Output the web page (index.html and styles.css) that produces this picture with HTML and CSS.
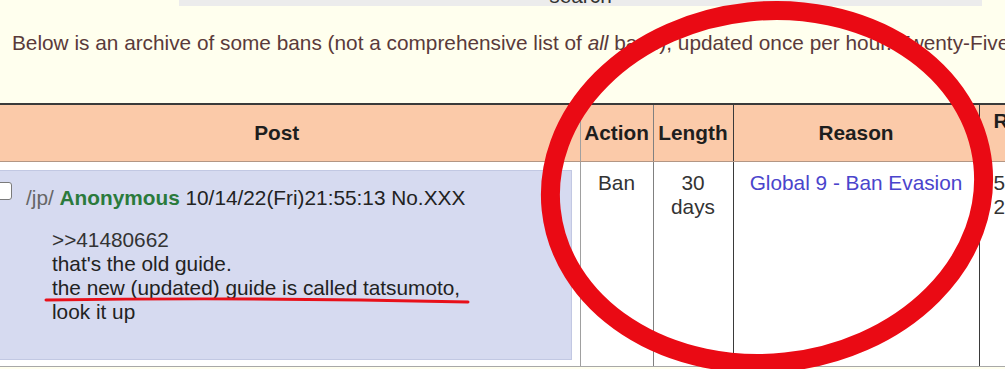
FILE: index.html
```html
<!DOCTYPE html>
<html>
<head>
<meta charset="utf-8">
<title>Bans</title>
<link rel="stylesheet" href="styles.css">
</head>
<body>
<div class="page">
  <div class="searchbar"><span>search</span></div>
  <p class="intro">Below is an archive of some bans (not a comprehensive list of <i>all</i> bans), updated once per hour. Twenty-Five most recent bans are shown.</p>
  <table class="bans">
    <colgroup>
      <col class="w-post">
      <col class="w-action">
      <col class="w-length">
      <col class="w-reason">
      <col class="w-rep">
    </colgroup>
    <thead>
      <tr>
        <th class="c-post">Post</th>
        <th class="c-action">Action</th>
        <th class="c-length">Length</th>
        <th class="c-reason">Reason</th>
        <th class="c-rep">Reported</th>
      </tr>
    </thead>
    <tbody>
      <tr>
        <td class="c-post">
          <div class="postbox">
            <div class="postinfo">
              <span class="cb"></span>
              <span class="info"><span class="board">/jp/</span> <span class="name">Anonymous</span> <span class="date">10/14/22(Fri)21:55:13</span> <span class="no">No.XXX</span></span>
            </div>
            <blockquote class="msg"><span class="quotelink">&gt;&gt;41480662</span><br>that's the old guide.<br>the new (updated) guide is called tatsumoto,<br>look it up</blockquote>
          </div>
        </td>
        <td class="c-action">Ban</td>
        <td class="c-length">30<br>days</td>
        <td class="c-reason"><a class="reason" href="#">Global 9 - Ban Evasion</a></td>
        <td class="c-rep">5 minutes<br>2 seconds</td>
      </tr>
    </tbody>
  </table>
  <svg class="annot" width="1005" height="369" viewBox="0 0 1005 369">
    <ellipse cx="767" cy="187" rx="217" ry="176" transform="rotate(-6 767 187)" fill="none" stroke="#ea0a14" stroke-width="19"/>
    <path d="M46 300 Q 257 297 468 302" fill="none" stroke="#e8101a" stroke-width="3" stroke-linecap="round"/>
  </svg>
</div>
</body>
</html>
```
FILE: styles.css
```css
html, body {
  margin: 0;
  padding: 0;
  overflow: hidden;
  background: #FFFFEE;
}

body {
  font-family: "Liberation Sans", Arial, sans-serif;
  font-size: 20.8px;
  line-height: 24px;
  color: #222;
}

.page {
  position: relative;
  width: 1005px;
  height: 369px;
  overflow: hidden;
}

.searchbar {
  margin-left: 179px;
  width: 803px;
  height: 6px;
  background: #ececec;
  overflow: hidden;
  text-align: center;
}

.searchbar span {
  display: block;
  margin-top: -16px;
  color: #333;
}

.intro {
  margin: 25px 0 0 12px;
  white-space: nowrap;
  color: #5a3a3a;
}

.bans {
  margin: 48px 0 0 -26px;
  border-collapse: collapse;
  table-layout: fixed;
  width: 1155px;
}

.w-post { width: 606px; }
.w-action { width: 73px; }
.w-length { width: 80px; }
.w-reason { width: 246px; }
.w-rep { width: 150px; }

.bans th {
  background: #FBCAA9;
  height: 56px;
  padding: 0;
  font-weight: bold;
  color: #1e1e1e;
  border-top: 2px solid #3a3a3a;
  border-bottom: 1px solid #b39684;
  text-align: center;
  vertical-align: middle;
}

.bans td {
  background: #fff;
  vertical-align: top;
  text-align: center;
  padding: 9px 0 0;
  color: #333;
  border-bottom: 1px solid #a8a8a8;
}

.bans .c-action { border-left: 1px solid #a0a0a0; }
.bans .c-length { border-left: 1px solid #808080; }
.bans .c-reason { border-left: 1px solid #3a3a3a; }
.bans .c-rep {
  border-left: 1px solid #3a3a3a;
  text-align: left;
  padding-left: 14px;
  white-space: nowrap;
}

.bans th.c-rep {
  vertical-align: top;
  height: 52px;
  padding-top: 4px;
}

.bans td.c-post {
  padding: 8px 8px 6px 6px;
  text-align: left;
}

.postbox {
  box-sizing: border-box;
  height: 190px;
  background: #D6DAF0;
  border: 1px solid #c2c8e3;
  padding: 15px 0 0 13px;
}

.postinfo {
  display: flex;
  align-items: flex-start;
  white-space: nowrap;
}

.cb {
  box-sizing: border-box;
  width: 18px;
  height: 18px;
  margin: -4px 14px 0 0;
  background: #fff;
  border: 1px solid #7a7a7a;
  border-radius: 3px;
  flex: none;
}

.board { color: #666; }
.name { color: #2b7a3c; font-weight: bold; }
.date, .no { color: #222; }

.msg {
  margin: 18px 0 0 58px;
  color: #222;
}

.quotelink { color: #333; }

.reason {
  color: #4a44cc;
  text-decoration: none;
}

.annot {
  position: absolute;
  left: 0;
  top: 0;
  pointer-events: none;
}
```
